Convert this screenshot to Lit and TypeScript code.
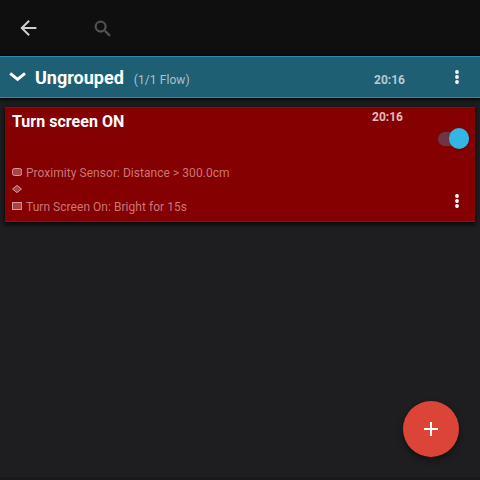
import { LitElement, html, css, svg } from "lit";
import { customElement, property } from "lit/decorators.js";

const dots = html`<svg width="6" height="16" viewBox="0 0 6 16" fill="#fff">
  <circle cx="3" cy="3" r="1.9" /><circle cx="3" cy="8" r="1.9" /><circle cx="3" cy="13" r="1.9" />
</svg>`;

const shapes = {
  trigger: svg`<rect x="0.5" y="1.5" width="9.2" height="7" rx="2" />`,
  condition: svg`<path d="M5 1.4 9.5 5 5 8.6.5 5z" />`,
  action: svg`<rect x="0.5" y="1.5" width="9.2" height="7" />`,
};

@customElement("flow-step")
class FlowStep extends LitElement {
  @property() kind: keyof typeof shapes = "trigger";
  @property() text = "";
  static styles = css`
    :host { display: flex; align-items: center; height: 17px; gap: 4px; }
    svg { display: block; flex: none; margin-bottom: 2px; fill: #a84445; stroke: #d79a9a; stroke-width: 1; }
    span { font-size: 12px; line-height: 16px; letter-spacing: 0.04px; color: #c87778; white-space: pre; padding-top: 1px; }
  `;
  render() {
    return html`<svg width="10" height="10" viewBox="0 0 10 10">${shapes[this.kind]}</svg><span>${this.text}</span>`;
  }
}

@customElement("flow-card")
class FlowCard extends LitElement {
  static styles = css`
    :host {
      display: grid; grid-template-columns: 1fr auto; box-sizing: border-box;
      margin: 9px 5px 0; height: 115px; background: #850000;
      border-top: 1px solid #8d0d0c; border-bottom: 1px solid #8e1010;
      box-shadow: 0 2px 4px 1px rgba(0, 0, 0, 0.65);
    }
    .main { display: flex; flex-direction: column; padding-left: 7px; }
    .title { font-size: 16px; line-height: 20px; letter-spacing: 0.03px; font-weight: 700; color: #fff; margin-top: 4px; }
    .steps { display: flex; flex-direction: column; margin-top: 32px; }
    .side { display: flex; flex-direction: column; width: 103px; }
    .time { font-size: 12px; line-height: 14px; font-weight: 700; color: #e0bcbc; margin-top: 2px; }
    .switch { display: flex; align-items: center; align-self: flex-end; height: 21px; margin: 4px 6px 0 0; }
    .track { width: 22px; height: 14px; border-radius: 7px; background: #6f3545; }
    .thumb { width: 20.5px; height: 20.5px; border-radius: 50%; background: #33b5e5; margin-left: -11.5px; box-shadow: 0 1px 2px rgba(0, 0, 0, 0.15); }
    .menu { display: flex; align-self: flex-end; margin: 44px 15px 0 0; }
  `;
  render() {
    return html`
      <div class="main">
        <div class="title">Turn screen ON</div>
        <div class="steps">
          <flow-step kind="trigger" text="Proximity Sensor: Distance &gt; 300.0cm"></flow-step>
          <flow-step kind="condition"></flow-step>
          <flow-step kind="action" text="Turn Screen On: Bright for 15s"></flow-step>
        </div>
      </div>
      <div class="side">
        <div class="time">20:16</div>
        <div class="switch"><div class="track"></div><div class="thumb"></div></div>
        <div class="menu">${dots}</div>
      </div>
    `;
  }
}

@customElement("app-root")
class AppRoot extends LitElement {
  static styles = css`
    :host {
      display: flex; flex-direction: column; position: relative; box-sizing: border-box;
      width: 480px; height: 480px; overflow: hidden; background: #1e1e20;
      font-family: Roboto, "Noto Sans", sans-serif; border-bottom: 3px solid #1c151c;
    }
    svg { display: block; }
    .bar { display: flex; align-items: center; flex: none; height: 56px; padding-left: 16px; gap: 50px; background: #0f0f10; }
    .group {
      display: flex; align-items: center; flex: none; box-sizing: border-box; height: 42px;
      padding: 0 20px 0 9px; background: #1f5f73;
      border-top: 1px solid #3987a8; border-bottom: 1px solid #3987a8;
      box-shadow: 0 1px 4px 1px rgba(0, 0, 0, 0.75);
    }
    .name { font-size: 18px; line-height: 24px; font-weight: 700; color: #fff; margin: 2px 0 0 9px; }
    .count { font-size: 12px; line-height: 16px; letter-spacing: 0.08px; color: #a9c2ca; margin: 6px auto 0 10px; }
    .time { font-size: 12px; line-height: 16px; font-weight: 700; color: #b5cad1; margin: 6px 49px 0 0; }
    .fab {
      position: absolute; left: 403px; top: 401px; width: 56px; height: 56px; border-radius: 50%;
      display: flex; align-items: center; justify-content: center; background: #db4437;
      box-shadow: 0 3px 6px rgba(0, 0, 0, 0.45);
    }
  `;
  render() {
    return html`
      <div class="bar">
        <svg width="24" height="24" viewBox="0 0 24 24" fill="#cfcfcf">
          <path d="M20 11H7.83l5.59-5.59L12 4l-8 8 8 8 1.41-1.41L7.83 13H20z" transform="translate(.4 0)" />
        </svg>
        <svg width="24" height="24" viewBox="0 0 24 24" fill="#565656" stroke="#565656" stroke-width=".35">
          <path transform="translate(2.1 2) scale(.9)" d="M15.5 14h-.79l-.28-.27A6.47 6.47 0 0 0 16 9.5 6.5 6.5 0 1 0 9.5 16c1.61 0 3.09-.59 4.23-1.57l.27.28v.79l5 4.99L20.49 19zm-6 0a4.5 4.5 0 1 1 0-9 4.5 4.5 0 0 1 0 9z" />
        </svg>
      </div>
      <div class="group">
        <svg width="17" height="10" viewBox="0 0 17 10" fill="none" stroke="#fff" stroke-width="2.9">
          <path d="M1.2 1.4 8.6 7.4 16 1.4" />
        </svg>
        <span class="name">Ungrouped</span>
        <span class="count">(1/1 Flow)</span>
        <span class="time">20:16</span>
        ${dots}
      </div>
      <flow-card></flow-card>
      <div class="fab">
        <svg width="24" height="24" viewBox="0 0 24 24" fill="#fff"><path d="M19 13h-6v6h-2v-6H5v-2h6V5h2v6h6z" /></svg>
      </div>
    `;
  }
}
